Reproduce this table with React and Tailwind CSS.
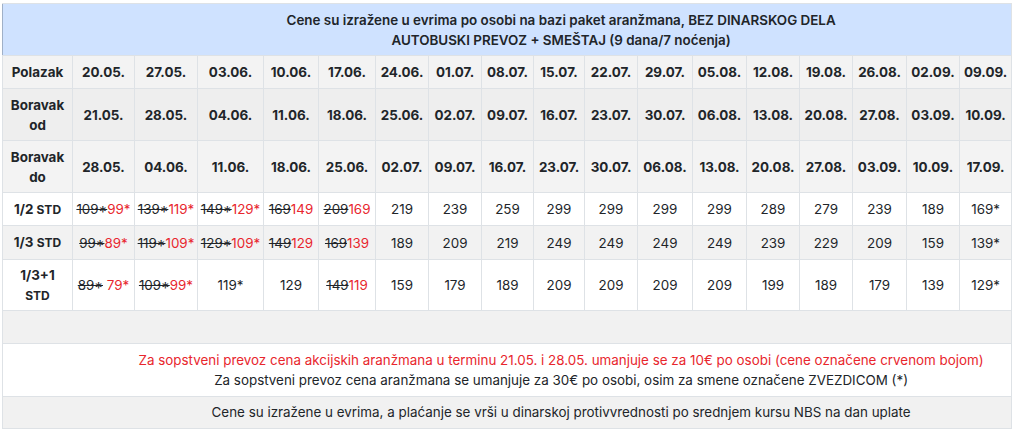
import React from "react";

const widths = [70, 62, 63, 66, 55, 57, 53, 53, 52, 51, 53, 55, 54, 53, 53, 54, 53, 52];

const polazak = ["20.05.", "27.05.", "03.06.", "10.06.", "17.06.", "24.06.", "01.07.", "08.07.", "15.07.", "22.07.", "29.07.", "05.08.", "12.08.", "19.08.", "26.08.", "02.09.", "09.09."];
const boravakOd = ["21.05.", "28.05.", "04.06.", "11.06.", "18.06.", "25.06.", "02.07.", "09.07.", "16.07.", "23.07.", "30.07.", "06.08.", "13.08.", "20.08.", "27.08.", "03.09.", "10.09."];
const boravakDo = ["28.05.", "04.06.", "11.06.", "18.06.", "25.06.", "02.07.", "09.07.", "16.07.", "23.07.", "30.07.", "06.08.", "13.08.", "20.08.", "27.08.", "03.09.", "10.09.", "17.09."];

const polaStd = [["109*", "99*"], ["139*", "119*"], ["149*", "129*"], ["169", "149"], ["209", "169"], "219", "239", "259", "299", "299", "299", "299", "289", "279", "239", "189", "169*"];
const trecinaStd = [["99*", "89*"], ["119*", "109*"], ["129*", "109*"], ["149", "129"], ["169", "139"], "189", "209", "219", "249", "249", "249", "249", "239", "229", "209", "159", "139*"];
const trecinaPlus = [["89*", " 79*"], ["109*", "99*"], "119*", "129", ["149", "119"], "159", "179", "189", "209", "209", "209", "209", "199", "189", "179", "139", "129*"];

const cell = "border border-[#dee2e6] text-center align-middle p-0 leading-[20px]";

function Price({ value }) {
  if (Array.isArray(value)) {
    return (
      <span className="whitespace-pre">
        <span className="line-through">{value[0]}</span>
        <span className="text-[#e8262d]">{value[1]}</span>
      </span>
    );
  }
  return <span>{value}</span>;
}

function DateRow({ label, dates, bg, h }) {
  return (
    <tr className={`${bg} ${h}`}>
      <td className={`${cell} font-bold`}>{label}</td>
      {dates.map((d, i) => (
        <td key={i} className={`${cell} font-bold`}>{d}</td>
      ))}
    </tr>
  );
}

function PriceRow({ label, prices, bg, h }) {
  return (
    <tr className={`${bg} ${h}`}>
      <td className={`${cell} font-bold`}>{label}</td>
      {prices.map((p, i) => (
        <td key={i} className={cell}>
          <Price value={p} />
        </td>
      ))}
    </tr>
  );
}

export default function App() {
  return (
    <div className="bg-white w-[1015px] h-[433px] pt-[3px] pl-[2px] font-['Inter','Liberation_Sans',sans-serif] text-[13.4px] text-[#212529]">
      <table className="table-fixed border-collapse w-[1009px]">
        <colgroup>
          {widths.map((w, i) => (
            <col key={i} style={{ width: w }} />
          ))}
        </colgroup>
        <tbody>
          <tr className="h-[52px] bg-[#cfe2ff]">
            <td colSpan={18} className="border border-[#dee2e6] border-l-[#9fb0c8] text-center font-semibold leading-[20px] pl-[108px]">
              Cene su izražene u evrima po osobi na bazi paket aranžmana, BEZ DINARSKOG DELA
              <br />
              AUTOBUSKI PREVOZ + SMEŠTAJ (9 dana/7 noćenja)
            </td>
          </tr>
          <DateRow label="Polazak" dates={polazak} bg="bg-[#f3f3f3]" h="h-[33px]" />
          <DateRow
            label={<>Boravak<br />od</>}
            dates={boravakOd}
            bg="bg-[#eeeeee]"
            h="h-[52px]"
          />
          <DateRow
            label={<>Boravak<br />do</>}
            dates={boravakDo}
            bg="bg-[#f3f3f3]"
            h="h-[52px]"
          />
          <PriceRow
            label={<>1/2 <span className="text-[12px]">STD</span></>}
            prices={polaStd}
            bg="bg-white"
            h="h-[33px]"
          />
          <PriceRow
            label={<>1/3 <span className="text-[12px]">STD</span></>}
            prices={trecinaStd}
            bg="bg-[#f2f2f2]"
            h="h-[34px]"
          />
          <PriceRow
            label={<>1/3+1<br /><span className="text-[12px]">STD</span></>}
            prices={trecinaPlus}
            bg="bg-white"
            h="h-[51px]"
          />
          <tr className="h-[33px] bg-[#f1f1f1]">
            <td colSpan={18} className="border border-[#dee2e6]"></td>
          </tr>
          <tr className="h-[53px] bg-white">
            <td colSpan={18} className="border border-[#dee2e6] text-center leading-[20px] pl-[108px]">
              <span className="text-[#e8262d]">
                Za sopstveni prevoz cena akcijskih aranžmana u terminu 21.05. i 28.05. umanjuje se za 10€ po osobi (cene označene crvenom bojom)
              </span>
              <br />
              Za sopstveni prevoz cena aranžmana se umanjuje za 30€ po osobi, osim za smene označene ZVEZDICOM (*)
            </td>
          </tr>
          <tr className="h-[32px] bg-[#f1f1f1]">
            <td colSpan={18} className="border border-[#dee2e6] text-center pl-[108px]">
              Cene su izražene u evrima, a plaćanje se vrši u dinarskoj protivvrednosti po srednjem kursu NBS na dan uplate
            </td>
          </tr>
        </tbody>
      </table>
    </div>
  );
}
